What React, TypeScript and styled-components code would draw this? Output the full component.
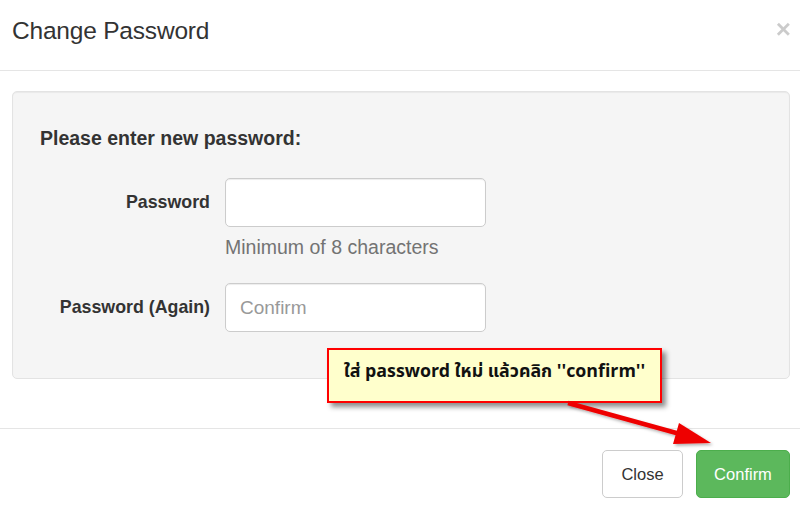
import React from "react";
import styled, { createGlobalStyle } from "styled-components";

const Global = createGlobalStyle`
  html, body { margin: 0; padding: 0; background: #ffffff; }
  body { font-family: "Liberation Sans", Arial, sans-serif; color: #333333; }
  * { box-sizing: border-box; }
`;

const Modal = styled.div`
  position: relative;
  width: 800px;
  height: 514px;
  background: #ffffff;
  overflow: hidden;
`;

const Header = styled.div`
  height: 71px;
  display: flex;
  align-items: center;
  justify-content: space-between;
  padding: 0 12px 8px 12px;
  border-bottom: 1px solid #e5e5e5;
`;

const Title = styled.h4`
  margin: 0;
  font-size: 24.5px;
  font-weight: normal;
  line-height: 30px;
  letter-spacing: -0.2px;
  color: #333333;
`;

const CloseX = styled.button`
  border: 0;
  background: transparent;
  padding: 0;
  margin: -4px -3px 0 0;
  font-family: "Liberation Sans", Arial, sans-serif;
  font-size: 26px;
  font-weight: bold;
  line-height: 1;
  color: #000000;
  opacity: 0.2;
  cursor: pointer;
`;

const Body = styled.div`
  padding: 20px 10px 49px 12px;
`;

const Well = styled.div`
  background: #f5f5f5;
  border: 1px solid #e3e3e3;
  border-radius: 5px;
  box-shadow: inset 0 1px 1px rgba(0, 0, 0, 0.05);
  padding: 34px 0 46px 0;
`;

const Heading = styled.div`
  font-size: 19.5px;
  font-weight: bold;
  line-height: 24px;
  padding-left: 27px;
  margin-bottom: 28px;
  color: #333333;
`;

const FormRow = styled.div<{ $gap?: number }>`
  display: grid;
  grid-template-columns: 197px 261px;
  column-gap: 15px;
  margin-bottom: ${(p) => p.$gap ?? 0}px;
`;

const Label = styled.label`
  text-align: right;
  font-size: 17.8px;
  font-weight: bold;
  line-height: 49px;
  color: #333333;
  white-space: nowrap;
`;

const Field = styled.div`
  display: flex;
  flex-direction: column;
`;

const Input = styled.input`
  height: 49px;
  width: 261px;
  border: 1px solid #cccccc;
  border-radius: 5px;
  background: #ffffff;
  box-shadow: inset 0 1px 1px rgba(0, 0, 0, 0.075);
  padding: 0 14px;
  font-family: "Liberation Sans", Arial, sans-serif;
  font-size: 19px;
  color: #555555;
  outline: none;
  &::placeholder { color: #999999; }
`;

const Help = styled.div`
  margin-top: 8px;
  font-size: 19.5px;
  line-height: 24px;
  color: #737373;
`;

const Footer = styled.div`
  border-top: 1px solid #e5e5e5;
  display: flex;
  justify-content: flex-end;
  gap: 13px;
  padding: 21px 10px 0 0;
`;

const Button = styled.button<{ $primary?: boolean; $w: number }>`
  width: ${(p) => p.$w}px;
  height: 48px;
  padding: 0;
  border-radius: 5px;
  border: 1px solid ${(p) => (p.$primary ? "#4cae4c" : "#cccccc")};
  background: ${(p) => (p.$primary ? "#5cb85c" : "#ffffff")};
  color: ${(p) => (p.$primary ? "#ffffff" : "#333333")};
  font-family: "Liberation Sans", Arial, sans-serif;
  font-size: 16.5px;
  font-weight: normal;
  cursor: pointer;
`;

const Callout = styled.div`
  position: absolute;
  left: 327px;
  top: 348px;
  width: 335px;
  height: 55px;
  background: #ffffcc;
  border: 2px solid #ff0000;
  box-shadow: 4px 4px 5px rgba(0, 0, 0, 0.45);
  display: flex;
  align-items: center;
  justify-content: center;
  padding-bottom: 8px;
  font-family: Tahoma, "Noto Sans Thai", "DejaVu Sans", "Liberation Sans", sans-serif;
  font-size: 17.8px;
  font-weight: bold;
  color: #111111;
  white-space: nowrap;
`;

const ArrowSvg = styled.svg`
  position: absolute;
  left: 0;
  top: 0;
  pointer-events: none;
`;

export default function App() {
  return (
    <>
      <Global />
      <Modal>
        <Header>
          <Title>Change Password</Title>
          <CloseX aria-label="close">×</CloseX>
        </Header>
        <Body>
          <Well>
            <Heading>Please enter new password:</Heading>
            <FormRow $gap={24}>
              <Label>Password</Label>
              <Field>
                <Input type="password" />
                <Help>Minimum of 8 characters</Help>
              </Field>
            </FormRow>
            <FormRow>
              <Label>Password (Again)</Label>
              <Field>
                <Input type="password" placeholder="Confirm" />
              </Field>
            </FormRow>
          </Well>
        </Body>
        <Footer>
          <Button $w={81}>Close</Button>
          <Button $primary $w={94}>Confirm</Button>
        </Footer>
        <Callout>ใส่ password ใหม่ แล้วคลิก ''confirm''</Callout>
        <ArrowSvg width="800" height="514" viewBox="0 0 800 514">
          <defs>
            <filter id="sh" x="-10%" y="-10%" width="130%" height="140%">
              <feDropShadow dx="2" dy="2" stdDeviation="1.5" floodColor="#000" floodOpacity="0.3" />
            </filter>
          </defs>
          <g filter="url(#sh)">
            <line x1="568" y1="403" x2="680" y2="434" stroke="#ee0000" strokeWidth="4.5" />
            <polygon points="711,443 673,444 679,423" fill="#ee0000" />
          </g>
        </ArrowSvg>
      </Modal>
    </>
  );
}
